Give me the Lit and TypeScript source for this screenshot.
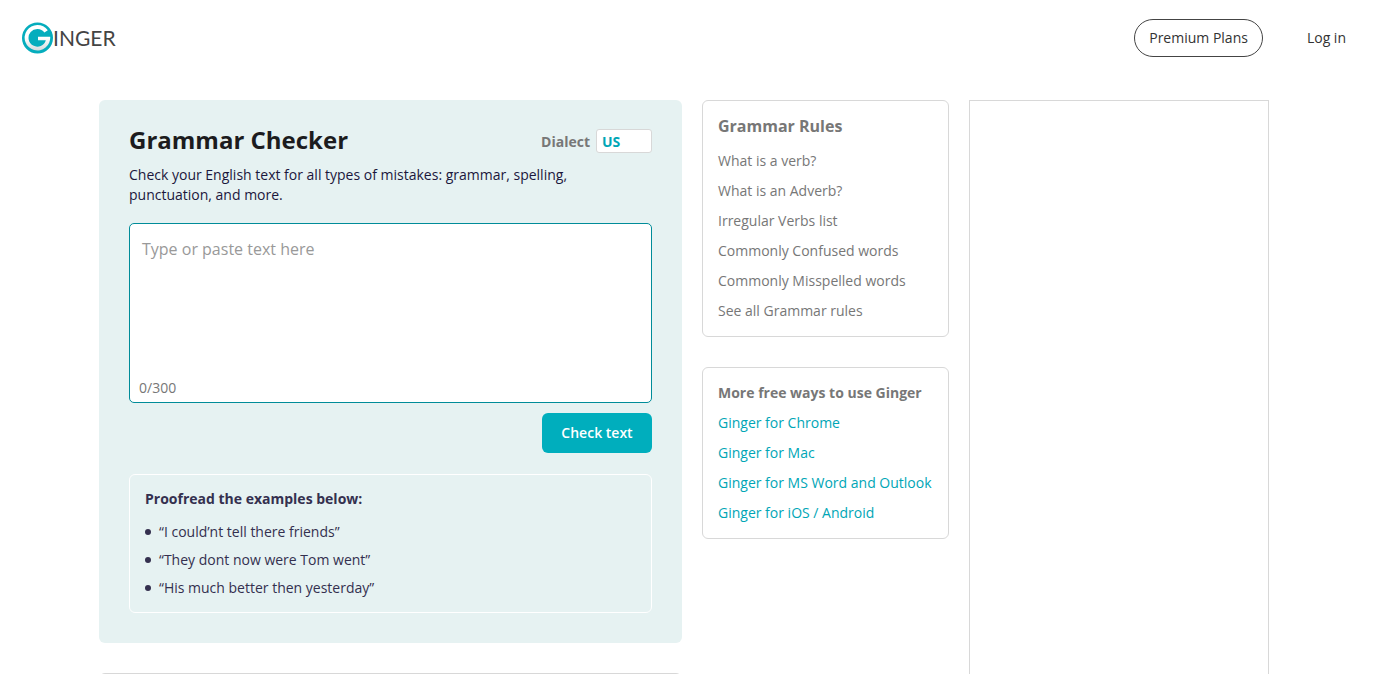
import { LitElement, html, css } from "lit";
import { customElement, state } from "lit/decorators.js";

const LIMIT = 300;

const RULES = [
  "What is a verb?",
  "What is an Adverb?",
  "Irregular Verbs list",
  "Commonly Confused words",
  "Commonly Misspelled words",
  "See all Grammar rules",
];

const APPS = [
  "Ginger for Chrome",
  "Ginger for Mac",
  "Ginger for MS Word and Outlook",
  "Ginger for iOS / Android",
];

const EXAMPLES = [
  "“I could’nt tell there friends”",
  "“They dont now were Tom went”",
  "“His much better then yesterday”",
];

@customElement("site-header")
class SiteHeader extends LitElement {
  static styles = css`
    :host {
      display: block;
      font: 14px/20px "Open Sans", sans-serif;
    }
    .bar {
      display: flex;
      align-items: center;
      justify-content: space-between;
      height: 76px;
      padding: 0 40px 0 21px;
    }
    .logo {
      display: flex;
      align-items: center;
      color: #444;
      text-decoration: none;
      font: 21px/32px Lato, sans-serif;
    }
    .mark {
      width: 32px;
      height: 32px;
    }
    .nav {
      display: flex;
      align-items: center;
      gap: 44px;
    }
    .plans,
    .login {
      color: #333;
      text-decoration: none;
    }
    .plans {
      padding: 8px 14px;
      border: 1px solid #444;
      border-radius: 20px;
    }
  `;

  render() {
    return html`
      <header class="bar">
        <a class="logo" href="#">
          <svg class="mark" viewBox="0 0 32 32" aria-hidden="true">
            <defs>
              <linearGradient id="g" x1="0" y1="0" x2="0" y2="1">
                <stop offset="0.5" stop-color="#fff" />
                <stop offset="1" stop-color="#d5dbdd" />
              </linearGradient>
            </defs>
            <circle cx="16.5" cy="16" r="15.5" fill="#05adbd" />
            <path
              d="M26.8 8.2A12.8 12.8 0 1 0 29.2 14.8H17V18.2H24.8A8.8 8.8 0 1 1 23.4 10.6Z"
              fill="url(#g)"
            />
          </svg>
          <span>INGER</span>
        </a>
        <nav class="nav">
          <a class="plans" href="#">Premium Plans</a>
          <a class="login" href="#">Log in</a>
        </nav>
      </header>
    `;
  }
}

@customElement("grammar-checker")
class GrammarChecker extends LitElement {
  static styles = css`
    :host {
      display: block;
      font: 14px/20px "Open Sans", sans-serif;
    }
    .panel {
      padding: 24px 30px 30px;
      background: #e6f2f2;
      border-radius: 6px;
    }
    .top {
      display: flex;
      align-items: center;
      justify-content: space-between;
    }
    .title {
      margin: 0;
      font-size: 24px;
      line-height: 32px;
      color: #1c1c1e;
    }
    .dialect {
      display: flex;
      align-items: center;
      gap: 6px;
      padding-top: 2px;
      font-weight: 700;
      line-height: 22px;
      color: #777;
    }
    .label {
      padding-top: 2px;
    }
    .select {
      appearance: none;
      box-sizing: border-box;
      width: 56px;
      height: 24px;
      margin: 0;
      padding: 1px 5px 0;
      border: 1px solid #d8d8d8;
      border-radius: 3px;
      background: #fff;
      color: #00a6b6;
      font: inherit;
    }
    .intro {
      max-width: 460px;
      margin: 9px 0 18px;
      color: #1b173c;
    }
    .editor {
      display: flex;
      flex-direction: column;
      border: 1px solid #008c99;
      border-radius: 5px;
      background: #fff;
    }
    .input {
      box-sizing: border-box;
      width: 100%;
      height: 154px;
      margin: 0;
      padding: 13px 12px;
      border: 0;
      border-radius: 5px;
      outline: 0;
      resize: none;
      background: none;
      color: #1b173c;
      font: 16px/24px "Open Sans", sans-serif;
    }
    .input::placeholder {
      color: #999;
      opacity: 1;
    }
    .count {
      padding: 0 9px 4px;
      color: #777;
    }
    .actions {
      display: flex;
      justify-content: flex-end;
      padding: 10px 0 21px;
    }
    .check {
      width: 110px;
      height: 40px;
      padding: 0;
      border: 0;
      border-radius: 6px;
      background: #00aebd;
      color: #fff;
      font: 600 14px/20px "Open Sans", sans-serif;
    }
    .examples {
      padding: 14px 15px 10px;
      border: 1px solid #fff;
      border-radius: 6px;
      color: #34304f;
    }
    .subtitle {
      margin: 0 0 9px;
      font-size: 14px;
      line-height: 20px;
    }
    .list {
      display: grid;
      margin: 0;
      padding: 0;
      list-style: none;
    }
    .item {
      display: flex;
      align-items: center;
      gap: 8px;
      line-height: 28px;
    }
    .item::before {
      content: "";
      width: 6px;
      height: 6px;
      border-radius: 50%;
      background: #34304f;
    }
  `;

  @state() private text = "";

  private onInput(e: Event) {
    this.text = (e.target as HTMLTextAreaElement).value;
  }

  render() {
    return html`
      <section class="panel">
        <div class="top">
          <h1 class="title">Grammar Checker</h1>
          <div class="dialect">
            <label class="label" for="dialect">Dialect</label>
            <select class="select" id="dialect">
              <option>US</option>
              <option>UK</option>
            </select>
          </div>
        </div>
        <p class="intro">
          Check your English text for all types of mistakes: grammar, spelling,
          punctuation, and more.
        </p>
        <div class="editor">
          <textarea
            class="input"
            aria-label="Text to check"
            placeholder="Type or paste text here"
            maxlength=${LIMIT}
            @input=${this.onInput}
          ></textarea>
          <div class="count">${this.text.length}/${LIMIT}</div>
        </div>
        <div class="actions">
          <button class="check" type="button">Check text</button>
        </div>
        <div class="examples">
          <h2 class="subtitle">Proofread the examples below:</h2>
          <ul class="list">
            ${EXAMPLES.map((t) => html`<li class="item">${t}</li>`)}
          </ul>
        </div>
      </section>
    `;
  }
}

@customElement("app-root")
class AppRoot extends LitElement {
  static styles = css`
    :host {
      display: block;
      height: 100vh;
      overflow-y: auto;
      scrollbar-width: none;
      background: #fff;
      font: 14px/20px "Open Sans", sans-serif;
      color: #777;
    }
    .page {
      display: grid;
      grid-template-columns: minmax(0, 1fr) 247px 300px;
      gap: 20px;
      max-width: 1170px;
      margin: 0 auto;
    }
    .shell {
      padding: 24px 18px 0 0;
    }
    .column {
      display: flex;
      flex-direction: column;
      gap: 30px;
    }
    .card {
      padding: 15px 15px 10px;
      border: 1px solid #d8d8d8;
      border-radius: 6px;
    }
    .next {
      min-height: 200px;
    }
    .heading {
      margin: 0;
      padding-bottom: 5px;
      font-size: 14px;
      line-height: 20px;
    }
    .large {
      padding-bottom: 10px;
      font-size: 16px;
    }
    .links {
      margin: 0;
      padding: 0;
      list-style: none;
      line-height: 30px;
    }
    .link {
      color: inherit;
      text-decoration: none;
    }
    .accent {
      color: #00a6b6;
    }
    .ad {
      border: 1px solid #d8d8d8;
    }
  `;

  private links(items: string[]) {
    return items.map((t) => html`<li><a class="link" href="#">${t}</a></li>`);
  }

  render() {
    return html`
      <site-header></site-header>
      <div class="shell">
        <main class="page">
          <div class="column">
            <grammar-checker></grammar-checker>
            <section class="card next"></section>
          </div>
          <div class="column">
            <section class="card">
              <h2 class="heading large">Grammar Rules</h2>
              <ul class="links">
                ${this.links(RULES)}
              </ul>
            </section>
            <section class="card">
              <h2 class="heading">More free ways to use Ginger</h2>
              <ul class="links accent">
                ${this.links(APPS)}
              </ul>
            </section>
          </div>
          <aside class="ad"></aside>
        </main>
      </div>
    `;
  }
}
